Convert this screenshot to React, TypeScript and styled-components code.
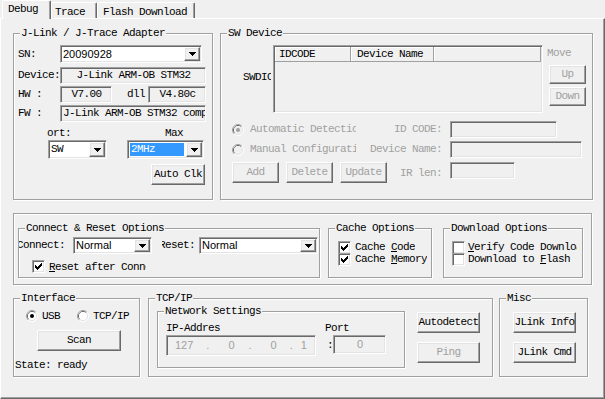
import React from "react";
import styled, { createGlobalStyle, css } from "styled-components";

const UI = `"Liberation Mono", "DejaVu Sans Mono", monospace`;
const SANS = `"Liberation Sans", Arial, sans-serif`;
const FACE = "#f0f0f0";
const SHADOW = "#a0a0a0";
const DARK = "#696969";
const LIGHT = "#e3e3e3";
const GRAYTEXT = "#a0a0a0";

const Global = createGlobalStyle`
  html, body { margin: 0; padding: 0; background: ${FACE}; }
`;

const sunken = css`
  border: 1px solid;
  border-color: ${SHADOW} #fff #fff ${SHADOW};
  box-shadow: inset 1px 1px 0 ${DARK}, inset -1px -1px 0 ${LIGHT};
`;
const raised = css`
  border: 1px solid;
  border-color: #fff ${DARK} ${DARK} #fff;
  box-shadow: inset -1px -1px 0 ${SHADOW}, inset 1px 1px 0 ${LIGHT};
`;

type Box = { $w?: number; $h?: number; $ml?: number; $mt?: number };
const boxCss = css<Box>`
  flex: none;
  ${(p) => (p.$w != null ? `width: ${p.$w}px;` : "")}
  ${(p) => (p.$h != null ? `height: ${p.$h}px;` : "")}
  margin-left: ${(p) => p.$ml ?? 0}px;
  margin-top: ${(p) => p.$mt ?? 0}px;
`;

const Dialog = styled.div`
  width: 605px;
  height: 399px;
  overflow: hidden;
  background: ${FACE};
  font-family: ${UI};
  font-size: 11px;
  letter-spacing: -0.6px;
  line-height: 13px;
  color: #000;
  box-sizing: border-box;
  & *, & *::before, & *::after { box-sizing: border-box; }
`;

const TabStrip = styled.div`
  position: relative;
  z-index: 2;
  display: flex;
  align-items: flex-end;
  height: 18px;
  padding-left: 2px;
`;

const Tab = styled.div<{ $active?: boolean; $w: number; $pl: number }>`
  flex: none;
  width: ${(p) => p.$w}px;
  height: ${(p) => (p.$active ? 19 : 16)}px;
  margin-bottom: ${(p) => (p.$active ? -1 : 0)}px;
  padding: ${(p) => (p.$active ? 2 : 3)}px 0 0 ${(p) => p.$pl}px;
  background: ${FACE};
  border: 1px solid;
  border-bottom: none;
  border-color: #fff ${DARK} transparent #fff;
  border-radius: 2px 2px 0 0;
  box-shadow: inset -1px 0 0 ${SHADOW};
  white-space: nowrap;
`;

const Panel = styled.div`
  position: relative;
  z-index: 1;
  height: 381px;
  border: 1px solid;
  border-color: #fff ${DARK} ${DARK} #fff;
  box-shadow: inset -1px -1px 0 ${SHADOW};
  padding: 14px 0 0 12px;
  display: flex;
  flex-direction: column;
  align-items: flex-start;
`;

const GroupBox = styled.div<Box>`
  ${boxCss};
  position: relative;
  border: 1px solid ${SHADOW};
  box-shadow: inset 1px 1px 0 #fff, 1px 1px 0 #fff;
`;

const Legend = styled.span`
  position: absolute;
  top: -7px;
  left: 6px;
  padding: 0 1px;
  background: ${FACE};
  white-space: nowrap;
  line-height: 13px;
`;

const Row = styled.div<Box & { $pl?: number; $align?: string }>`
  ${boxCss};
  display: flex;
  align-items: ${(p) => p.$align ?? "center"};
  padding-left: ${(p) => p.$pl ?? 0}px;
`;

const Column = styled.div<Box & { $pl?: number }>`
  ${boxCss};
  display: flex;
  flex-direction: column;
  align-items: flex-start;
  padding-left: ${(p) => p.$pl ?? 0}px;
`;

const Caption = styled.span<Box & { $dim?: boolean }>`
  ${boxCss};
  white-space: nowrap;
  color: ${(p) => (p.$dim ? GRAYTEXT : "#000")};
`;

const FormLabel = styled.span<Box & { $dim?: boolean }>`
  ${boxCss};
  text-align: right;
  padding-right: 8px;
  white-space: nowrap;
  color: ${(p) => (p.$dim ? GRAYTEXT : "#000")};
`;

const ClipLabel = styled.span<Box & { $end?: boolean; $dim?: boolean }>`
  ${boxCss};
  display: flex;
  justify-content: ${(p) => (p.$end ? "flex-end" : "flex-start")};
  overflow: hidden;
  white-space: nowrap;
  color: ${(p) => (p.$dim ? GRAYTEXT : "#000")};
  & > span { flex: none; }
`;

const Field = styled.div<Box & { $center?: boolean; $white?: boolean; $sans?: boolean; $dim?: boolean }>`
  ${boxCss};
  ${sunken};
  display: flex;
  align-items: center;
  justify-content: ${(p) => (p.$center ? "center" : "flex-start")};
  padding: 0 1px 0 2px;
  overflow: hidden;
  white-space: nowrap;
  background: ${(p) => (p.$white ? "#fff" : FACE)};
  color: ${(p) => (p.$dim ? GRAYTEXT : "#000")};
  ${(p) => (p.$sans ? `font-family: ${SANS}; font-size: 11px; letter-spacing: 0;` : "")}
`;

const IPPart = styled.span<{ $ml: number }>`
  flex: none;
  margin-left: ${(p) => p.$ml}px;
`;

const ComboBox = styled.div<Box>`
  ${boxCss};
  ${sunken};
  display: flex;
  padding: 1px;
  background: #fff;
`;

const ComboValue = styled.span<{ $sans?: boolean; $selected?: boolean }>`
  flex: 1;
  min-width: 0;
  display: flex;
  align-items: center;
  align-self: ${(p) => (p.$selected ? "center" : "stretch")};
  height: ${(p) => (p.$selected ? "13px" : "auto")};
  margin: 0 ${(p) => (p.$selected ? 2 : 0)}px 0 ${(p) => (p.$selected ? 1 : 0)}px;
  padding-left: 1px;
  overflow: hidden;
  white-space: nowrap;
  background: ${(p) => (p.$selected ? "#3399ff" : "transparent")};
  color: ${(p) => (p.$selected ? "#fff" : "#000")};
  ${(p) => (p.$sans ? `font-family: ${SANS}; font-size: 11px; letter-spacing: 0;` : "")}
`;

const DropButton = styled.span`
  flex: none;
  width: 16px;
  ${raised};
  display: flex;
  align-items: center;
  justify-content: center;
  background: ${FACE};
`;

const PushButton = styled.button<Box>`
  ${boxCss};
  ${raised};
  padding: 0;
  font: inherit;
  letter-spacing: inherit;
  background: ${FACE};
  color: ${(p) => (p.disabled ? GRAYTEXT : "#000")};
  display: flex;
  align-items: center;
  justify-content: center;
  white-space: nowrap;
  cursor: default;
`;

const ListBox = styled.div<Box>`
  ${boxCss};
  ${sunken};
  padding: 1px;
  background: ${FACE};
  display: flex;
  flex-direction: column;
`;

const ListHeader = styled.div`
  display: flex;
  height: 15px;
  flex: none;
`;

const HeaderCell = styled.div<{ $w?: number; $pl: number }>`
  ${(p) => (p.$w != null ? `width: ${p.$w}px; flex: none;` : "flex: 1;")}
  padding-left: ${(p) => p.$pl}px;
  display: flex;
  align-items: center;
  white-space: nowrap;
  border-right: 1px solid ${SHADOW};
  border-bottom: 1px solid ${SHADOW};
  box-shadow: inset 1px 1px 0 #fff;
`;

const CheckBox = styled.span<Box>`
  ${boxCss};
  width: 13px;
  height: 13px;
  ${sunken};
  background: #fff;
  display: flex;
  align-items: center;
  justify-content: center;
`;

const CheckLabel = styled.span<Box>`
  ${boxCss};
  white-space: nowrap;
  overflow: hidden;
  line-height: 12px;
`;

const OptionCell = styled.div<Box>`
  ${boxCss};
  display: flex;
  align-items: center;
  overflow: hidden;
`;

const Arrow = () => (
  <svg width="7" height="4" viewBox="0 0 7 4">
    <path d="M0 0h7v1h-1v1h-1v1h-1v1h-1v-1h-1v-1h-1v-1h-1z" fill="#000" />
  </svg>
);

const CheckMark = () => (
  <svg width="7" height="7" viewBox="0 0 7 7">
    <path
      d="M0 2h1v3H0z M1 3h1v3H1z M2 4h1v3H2z M3 3h1v3H3z M4 2h1v3H4z M5 1h1v3H5z M6 0h1v3H6z"
      fill="#000"
    />
  </svg>
);

const RadioWrap = styled.span<Box>`
  ${boxCss};
  width: 12px;
  height: 12px;
  display: flex;
`;

const Radio = ({ checked, disabled, ml }: { checked?: boolean; disabled?: boolean; ml?: number }) => (
  <RadioWrap $ml={ml}>
    <svg width="12" height="12" viewBox="0 0 12 12">
      <path d="M2.11 9.89A5.5 5.5 0 0 1 9.89 2.11" stroke={SHADOW} fill="none" />
      <path d="M9.89 2.11A5.5 5.5 0 0 1 2.11 9.89" stroke="#fff" fill="none" />
      <path d="M2.82 9.18A4.5 4.5 0 0 1 9.18 2.82" stroke={DARK} fill="none" />
      <path d="M9.18 2.82A4.5 4.5 0 0 1 2.82 9.18" stroke={LIGHT} fill="none" />
      <circle cx="6" cy="6" r="4" fill={disabled ? FACE : "#fff"} />
      {checked && <circle cx="6" cy="6" r="2" fill={disabled ? SHADOW : "#000"} />}
    </svg>
  </RadioWrap>
);

const Combo = ({
  w,
  h = 19,
  ml,
  value,
  sans,
  selected,
}: {
  w: number;
  h?: number;
  ml?: number;
  value: string;
  sans?: boolean;
  selected?: boolean;
}) => (
  <ComboBox $w={w} $h={h} $ml={ml}>
    <ComboValue $sans={sans} $selected={selected}>
      {value}
    </ComboValue>
    <DropButton>
      <Arrow />
    </DropButton>
  </ComboBox>
);

const Check = ({ checked, ml }: { checked?: boolean; ml?: number }) => (
  <CheckBox $ml={ml}>{checked && <CheckMark />}</CheckBox>
);

export default function App() {
  return (
    <>
      <Global />
      <Dialog>
        <TabStrip>
          <Tab $active $w={49} $pl={5}>Debug</Tab>
          <Tab $w={46} $pl={3}>Trace</Tab>
          <Tab $w={98} $pl={5}>Flash Download</Tab>
        </TabStrip>
        <Panel>
          {/* Row 1 */}
          <Row $align="flex-start">
            <GroupBox $w={200} $h={167}>
              <Legend>J-Link / J-Trace Adapter</Legend>
              <Column $pl={4}>
                <Row $mt={11} $h={18}>
                  <Caption $w={42}>SN:</Caption>
                  <Combo w={142} h={18} value="20090928" sans />
                </Row>
                <Row $mt={4} $h={17}>
                  <Caption $w={42}>Device:</Caption>
                  <Field $w={146} $h={17} $center>J-Link ARM-OB STM32</Field>
                </Row>
                <Row $mt={2} $h={17}>
                  <Caption $w={42}>HW :</Caption>
                  <Field $w={52} $h={17} $center>V7.00</Field>
                  <Caption $ml={15}>dll</Caption>
                  <Field $ml={3} $w={58} $h={17} $center>V4.80c</Field>
                </Row>
                <Row $mt={2} $h={17}>
                  <Caption $w={42}>FW :</Caption>
                  <Field $w={146} $h={17}>J-Link ARM-OB STM32 compiled Aug 22 2012</Field>
                </Row>
                <Row $mt={5} $h={12}>
                  <Caption $ml={29}>ort:</Caption>
                  <Caption $ml={94}>Max</Caption>
                </Row>
                <Row $mt={1} $h={19}>
                  <Combo ml={30} w={59} value="SW" />
                  <Combo ml={20} w={77} value="2MHz" selected />
                </Row>
                <Row $mt={5} $h={21}>
                  <PushButton $ml={133} $w={54} $h={21}>Auto Clk</PushButton>
                </Row>
              </Column>
            </GroupBox>

            <GroupBox $ml={7} $w={373} $h={167}>
              <Legend>SW Device</Legend>
              <Row $mt={11} $h={68} $align="flex-start">
                <ClipLabel $ml={22} $w={28} $mt={26}>
                  <span>SWDIO</span>
                </ClipLabel>
                <ListBox $ml={2} $w={270} $h={68}>
                  <ListHeader>
                    <HeaderCell $w={76} $pl={4}>IDCODE</HeaderCell>
                    <HeaderCell $w={83} $pl={6}>Device Name</HeaderCell>
                    <HeaderCell $pl={0} />
                  </ListHeader>
                </ListBox>
                <Column $ml={4}>
                  <Caption $mt={2} $dim>Move</Caption>
                  <PushButton $mt={5} $ml={2} $w={37} $h={19} disabled>Up</PushButton>
                  <PushButton $mt={3} $ml={2} $w={37} $h={19} disabled>Down</PushButton>
                </Column>
              </Row>
              <Column $mt={8} $pl={11}>
                <Row $h={17}>
                  <OptionCell $w={124}>
                    <Radio checked disabled />
                    <Caption $ml={6} $dim>Automatic Detection</Caption>
                  </OptionCell>
                  <FormLabel $w={94} $dim>ID CODE:</FormLabel>
                  <Field $w={107} $h={17} />
                </Row>
                <Row $mt={3} $h={17}>
                  <OptionCell $w={124}>
                    <Radio disabled />
                    <Caption $ml={6} $dim>Manual Configuration</Caption>
                  </OptionCell>
                  <FormLabel $w={94} $dim>Device Name:</FormLabel>
                  <Field $w={132} $h={17} />
                </Row>
                <Row $mt={4} $h={21} $align="flex-start">
                  <OptionCell $w={168}>
                    <PushButton $w={47} $h={21} disabled>Add</PushButton>
                    <PushButton $ml={7} $w={47} $h={21} disabled>Delete</PushButton>
                    <PushButton $ml={7} $w={47} $h={21} disabled>Update</PushButton>
                  </OptionCell>
                  <FormLabel $w={50} $mt={5} $dim>IR len:</FormLabel>
                  <Field $w={65} $h={17} />
                </Row>
              </Column>
            </GroupBox>
          </Row>

          {/* Row 2 */}
          <GroupBox $mt={13} $w={579} $h={72}>
            <Row $mt={14} $pl={4} $align="flex-start">
              <GroupBox $w={302} $h={50}>
                <Legend>Connect &amp; Reset Options</Legend>
                <Row $mt={8} $h={17}>
                  <ClipLabel $w={46} $end>
                    <span>Connect:</span>
                  </ClipLabel>
                  <Combo ml={8} w={79} h={17} value="Normal" sans />
                  <ClipLabel $ml={10} $w={33} $end>
                    <span>Reset:</span>
                  </ClipLabel>
                  <Combo ml={4} w={119} h={17} value="Normal" sans />
                </Row>
                <Row $mt={6} $h={13}>
                  <Check ml={13} checked />
                  <CheckLabel $ml={4} $w={97}>
                    <u>R</u>eset after Connect
                  </CheckLabel>
                </Row>
              </GroupBox>
              <GroupBox $ml={8} $w={104} $h={50}>
                <Legend>Cache Options</Legend>
                <Row $mt={12} $h={12}>
                  <Check ml={9} checked />
                  <CheckLabel $ml={4}>
                    Cache <u>C</u>ode
                  </CheckLabel>
                </Row>
                <Row $h={12}>
                  <Check ml={9} checked />
                  <CheckLabel $ml={4}>
                    Cache <u>M</u>emory
                  </CheckLabel>
                </Row>
              </GroupBox>
              <GroupBox $ml={11} $w={140} $h={50}>
                <Legend>Download Options</Legend>
                <Row $mt={12} $h={12}>
                  <Check ml={8} />
                  <CheckLabel $ml={3} $w={109}>
                    <u>V</u>erify Code Download
                  </CheckLabel>
                </Row>
                <Row $h={12}>
                  <Check ml={8} />
                  <CheckLabel $ml={3} $w={109}>
                    Download to <u>F</u>lash
                  </CheckLabel>
                </Row>
              </GroupBox>
            </Row>
          </GroupBox>

          {/* Row 3 */}
          <Row $mt={13} $align="flex-start">
            <GroupBox $w={127} $h={79}>
              <Legend>Interface</Legend>
              <Row $mt={11} $h={12}>
                <Radio ml={12} checked />
                <Caption $ml={4}>USB</Caption>
                <Radio ml={17} />
                <Caption $ml={4}>TCP/IP</Caption>
              </Row>
              <Row $mt={8}>
                <PushButton $ml={23} $w={84} $h={21}>Scan</PushButton>
              </Row>
              <Row $mt={8}>
                <Caption $ml={1}>State: ready</Caption>
              </Row>
            </GroupBox>

            <GroupBox $ml={8} $w={345} $h={79}>
              <Legend>TCP/IP</Legend>
              <Row $align="flex-start">
                <GroupBox $ml={8} $mt={12} $w={248} $h={57}>
                  <Legend>Network Settings</Legend>
                  <Row $mt={10} $h={13}>
                    <Caption $ml={8}>IP-Addres</Caption>
                    <Caption $ml={105}>Port</Caption>
                  </Row>
                  <Row $h={21} $align="flex-start">
                    <Field $ml={8} $w={150} $h={21} $sans $dim>
                      <IPPart $ml={6}>127</IPPart>
                      <IPPart $ml={13}>.</IPPart>
                      <IPPart $ml={19}>0</IPPart>
                      <IPPart $ml={14}>.</IPPart>
                      <IPPart $ml={19}>0</IPPart>
                      <IPPart $ml={13}>.</IPPart>
                      <IPPart $ml={8}>1</IPPart>
                    </Field>
                    <Caption $ml={11} $mt={4}>:</Caption>
                    <Field $w={53} $h={19} $center $sans $dim>0</Field>
                  </Row>
                </GroupBox>
                <Column $ml={12} $mt={13}>
                  <PushButton $w={63} $h={21}>Autodetect</PushButton>
                  <PushButton $mt={9} $w={63} $h={21} disabled>Ping</PushButton>
                </Column>
              </Row>
            </GroupBox>

            <GroupBox $ml={6} $w={89} $h={79}>
              <Legend>Misc</Legend>
              <Column $ml={13} $mt={13}>
                <PushButton $w={63} $h={21}>JLink Info</PushButton>
                <PushButton $mt={9} $w={63} $h={21}>JLink Cmd</PushButton>
              </Column>
            </GroupBox>
          </Row>
        </Panel>
      </Dialog>
    </>
  );
}
